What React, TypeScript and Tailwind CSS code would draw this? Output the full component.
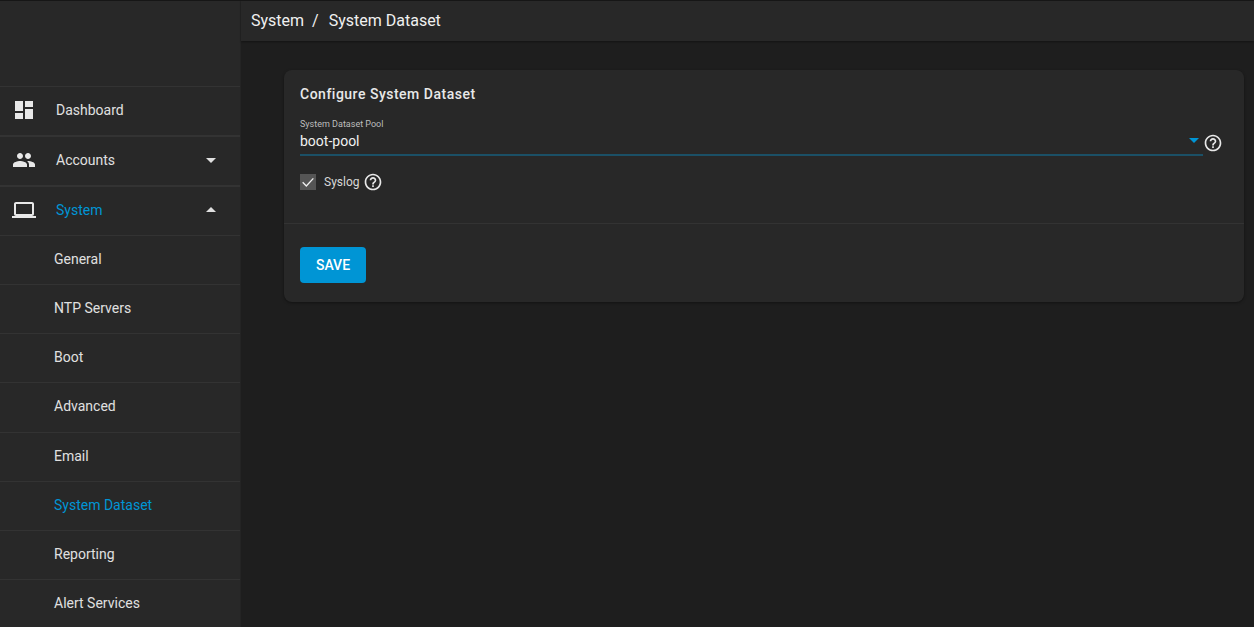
import React from "react";

const Caret = ({ up }: { up?: boolean }) => (
  <svg width="24" height="24" viewBox="0 0 24 24" className="fill-[#e0e0e0]">
    <path d={up ? "M7 14l5-5 5 5z" : "M7 10l5 5 5-5z"} />
  </svg>
);

const Help = ({ className }: { className?: string }) => (
  <svg width="20" height="20" viewBox="0 0 24 24" className={className}>
    <path
      fill="#e8e8e8"
      d="M11 18h2v-2h-2v2zm1-16C6.48 2 2 6.48 2 12s4.48 10 10 10 10-4.48 10-10S17.52 2 12 2zm0 18c-4.41 0-8-3.59-8-8s3.59-8 8-8 8 3.59 8 8-3.59 8-8 8zm0-14c-2.21 0-4 1.79-4 4h2c0-1.1.9-2 2-2s2 .9 2 2c0 2-3 1.75-3 5h2c0-2.25 3-2.5 3-5 0-2.21-1.79-4-4-4z"
    />
  </svg>
);

const TopItem = ({ icon, label, active, caret, thin }: { icon: string; label: string; active?: boolean; caret?: "up" | "down"; thin?: boolean }) => (
  <div className={`flex shrink-0 items-center border-[#333333] pr-[17px] pb-[2px] pl-[12px] ${thin ? "h-[49px] border-b" : "h-[50px] border-b-2"} ${active ? "text-[#0095d5]" : "text-[#e0e0e0]"}`}>
    <svg width="24" height="24" viewBox="0 0 24 24" className="fill-[#e8e8e8]"><path d={icon} /></svg>
    <span className="ml-[20px] flex-1 text-sm">{label}</span>
    {caret && <Caret up={caret === "up"} />}
  </div>
);

const SubItem = ({ label, active }: { label: string; active?: boolean }) => (
  <div className={`flex h-[49.14px] shrink-0 items-center border-b border-[#333333] pb-[2px] pl-[54px] text-sm ${active ? "text-[#0095d5]" : "text-[#e0e0e0]"}`}>{label}</div>
);

export default function App() {
  return (
    <div className="flex h-[627px] w-[1254px] overflow-hidden border-t border-[#161616] bg-[#1e1e1e] font-['Roboto',sans-serif]">
      <aside className="flex w-[241px] shrink-0 flex-col overflow-hidden border-r border-[#242424] bg-[#282828]">
        <div className="h-[86px] shrink-0 border-b border-[#333333]" />
        <TopItem label="Dashboard" icon="M3 13h8V3H3v10zm0 8h8v-6H3v6zm10 0h8V11h-8v10zm0-18v6h8V3h-8z" />
        <TopItem label="Accounts" caret="down" icon="M16 11c1.66 0 2.99-1.34 2.99-3S17.66 5 16 5c-1.66 0-3 1.34-3 3s1.34 3 3 3zm-8 0c1.66 0 2.99-1.34 2.99-3S9.66 5 8 5C6.34 5 5 6.34 5 8s1.34 3 3 3zm0 2c-2.33 0-7 1.17-7 3.5V19h14v-2.5c0-2.33-4.67-3.5-7-3.5zm8 0c-.29 0-.62.02-.97.05 1.16.84 1.97 1.97 1.97 3.45V19h6v-2.5c0-2.33-4.67-3.5-7-3.5z" />
        <TopItem label="System" active thin caret="up" icon="M20 18c1.1 0 1.99-.9 1.99-2L22 6c0-1.1-.9-2-2-2H4c-1.1 0-2 .9-2 2v10c0 1.1.9 2 2 2H0v2h24v-2h-4zM4 6h16v10H4V6z" />
        <SubItem label="General" />
        <SubItem label="NTP Servers" />
        <SubItem label="Boot" />
        <SubItem label="Advanced" />
        <SubItem label="Email" />
        <SubItem label="System Dataset" active />
        <SubItem label="Reporting" />
        <SubItem label="Alert Services" />
      </aside>
      <main className="flex min-w-0 flex-1 flex-col">
        <header className="flex h-[40px] shrink-0 items-center bg-[#282828] pl-[10px] text-base text-[#f0f0f0] shadow-[0_1px_2px_rgba(0,0,0,0.35)]">
          <span>System</span>
          <span className="mr-[10px] ml-[8px]">/</span>
          <span>System Dataset</span>
        </header>
        <div className="pt-[29px] pr-[10px] pl-[43px]">
          <section className="h-[232px] rounded-lg bg-[#282828] shadow-[0_1px_3px_rgba(0,0,0,0.4)]">
            <div className="h-[154px] border-b border-[#333333] pt-[15px] pr-[21px] pl-4">
              <h1 className="text-sm leading-[18px] font-medium tracking-[0.5px] text-[#e8e8e8]">Configure System Dataset</h1>
              <div className="mt-[16px] flex items-start">
                <div className="h-[37px] flex-1 border-b-2 border-[#1b5066]">
                  <div className="text-[9px] leading-[10px] text-[#bdbdbd]">System Dataset Pool</div>
                  <div className="relative mt-[3px] text-sm leading-[19px] text-[#f0f0f0]">
                    boot-pool
                    <span className="absolute top-[6px] right-[4px] h-0 w-0 border-x-[5px] border-t-[5px] border-x-transparent border-t-[#0095d5]" />
                  </div>
                </div>
                <Help className="mt-[14px]" />
              </div>
              <div className="mt-[16px] flex items-center">
                <span className="flex h-4 w-4 items-center justify-center bg-[#555555]">
                  <svg width="16" height="16" viewBox="0 0 24 24" fill="none" stroke="#f0f0f0" strokeWidth="2"><path d="M4 12.5l5.5 5.5L20 6.5" /></svg>
                </span>
                <span className="ml-2 text-xs text-[#d8d8d8]">Syslog</span>
                <Help className="ml-[3.5px]" />
              </div>
            </div>
            <div className="px-4 pt-[23px]">
              <button className="h-9 w-[66px] rounded bg-[#0095d5] text-sm font-medium text-white">SAVE</button>
            </div>
          </section>
        </div>
      </main>
    </div>
  );
}
